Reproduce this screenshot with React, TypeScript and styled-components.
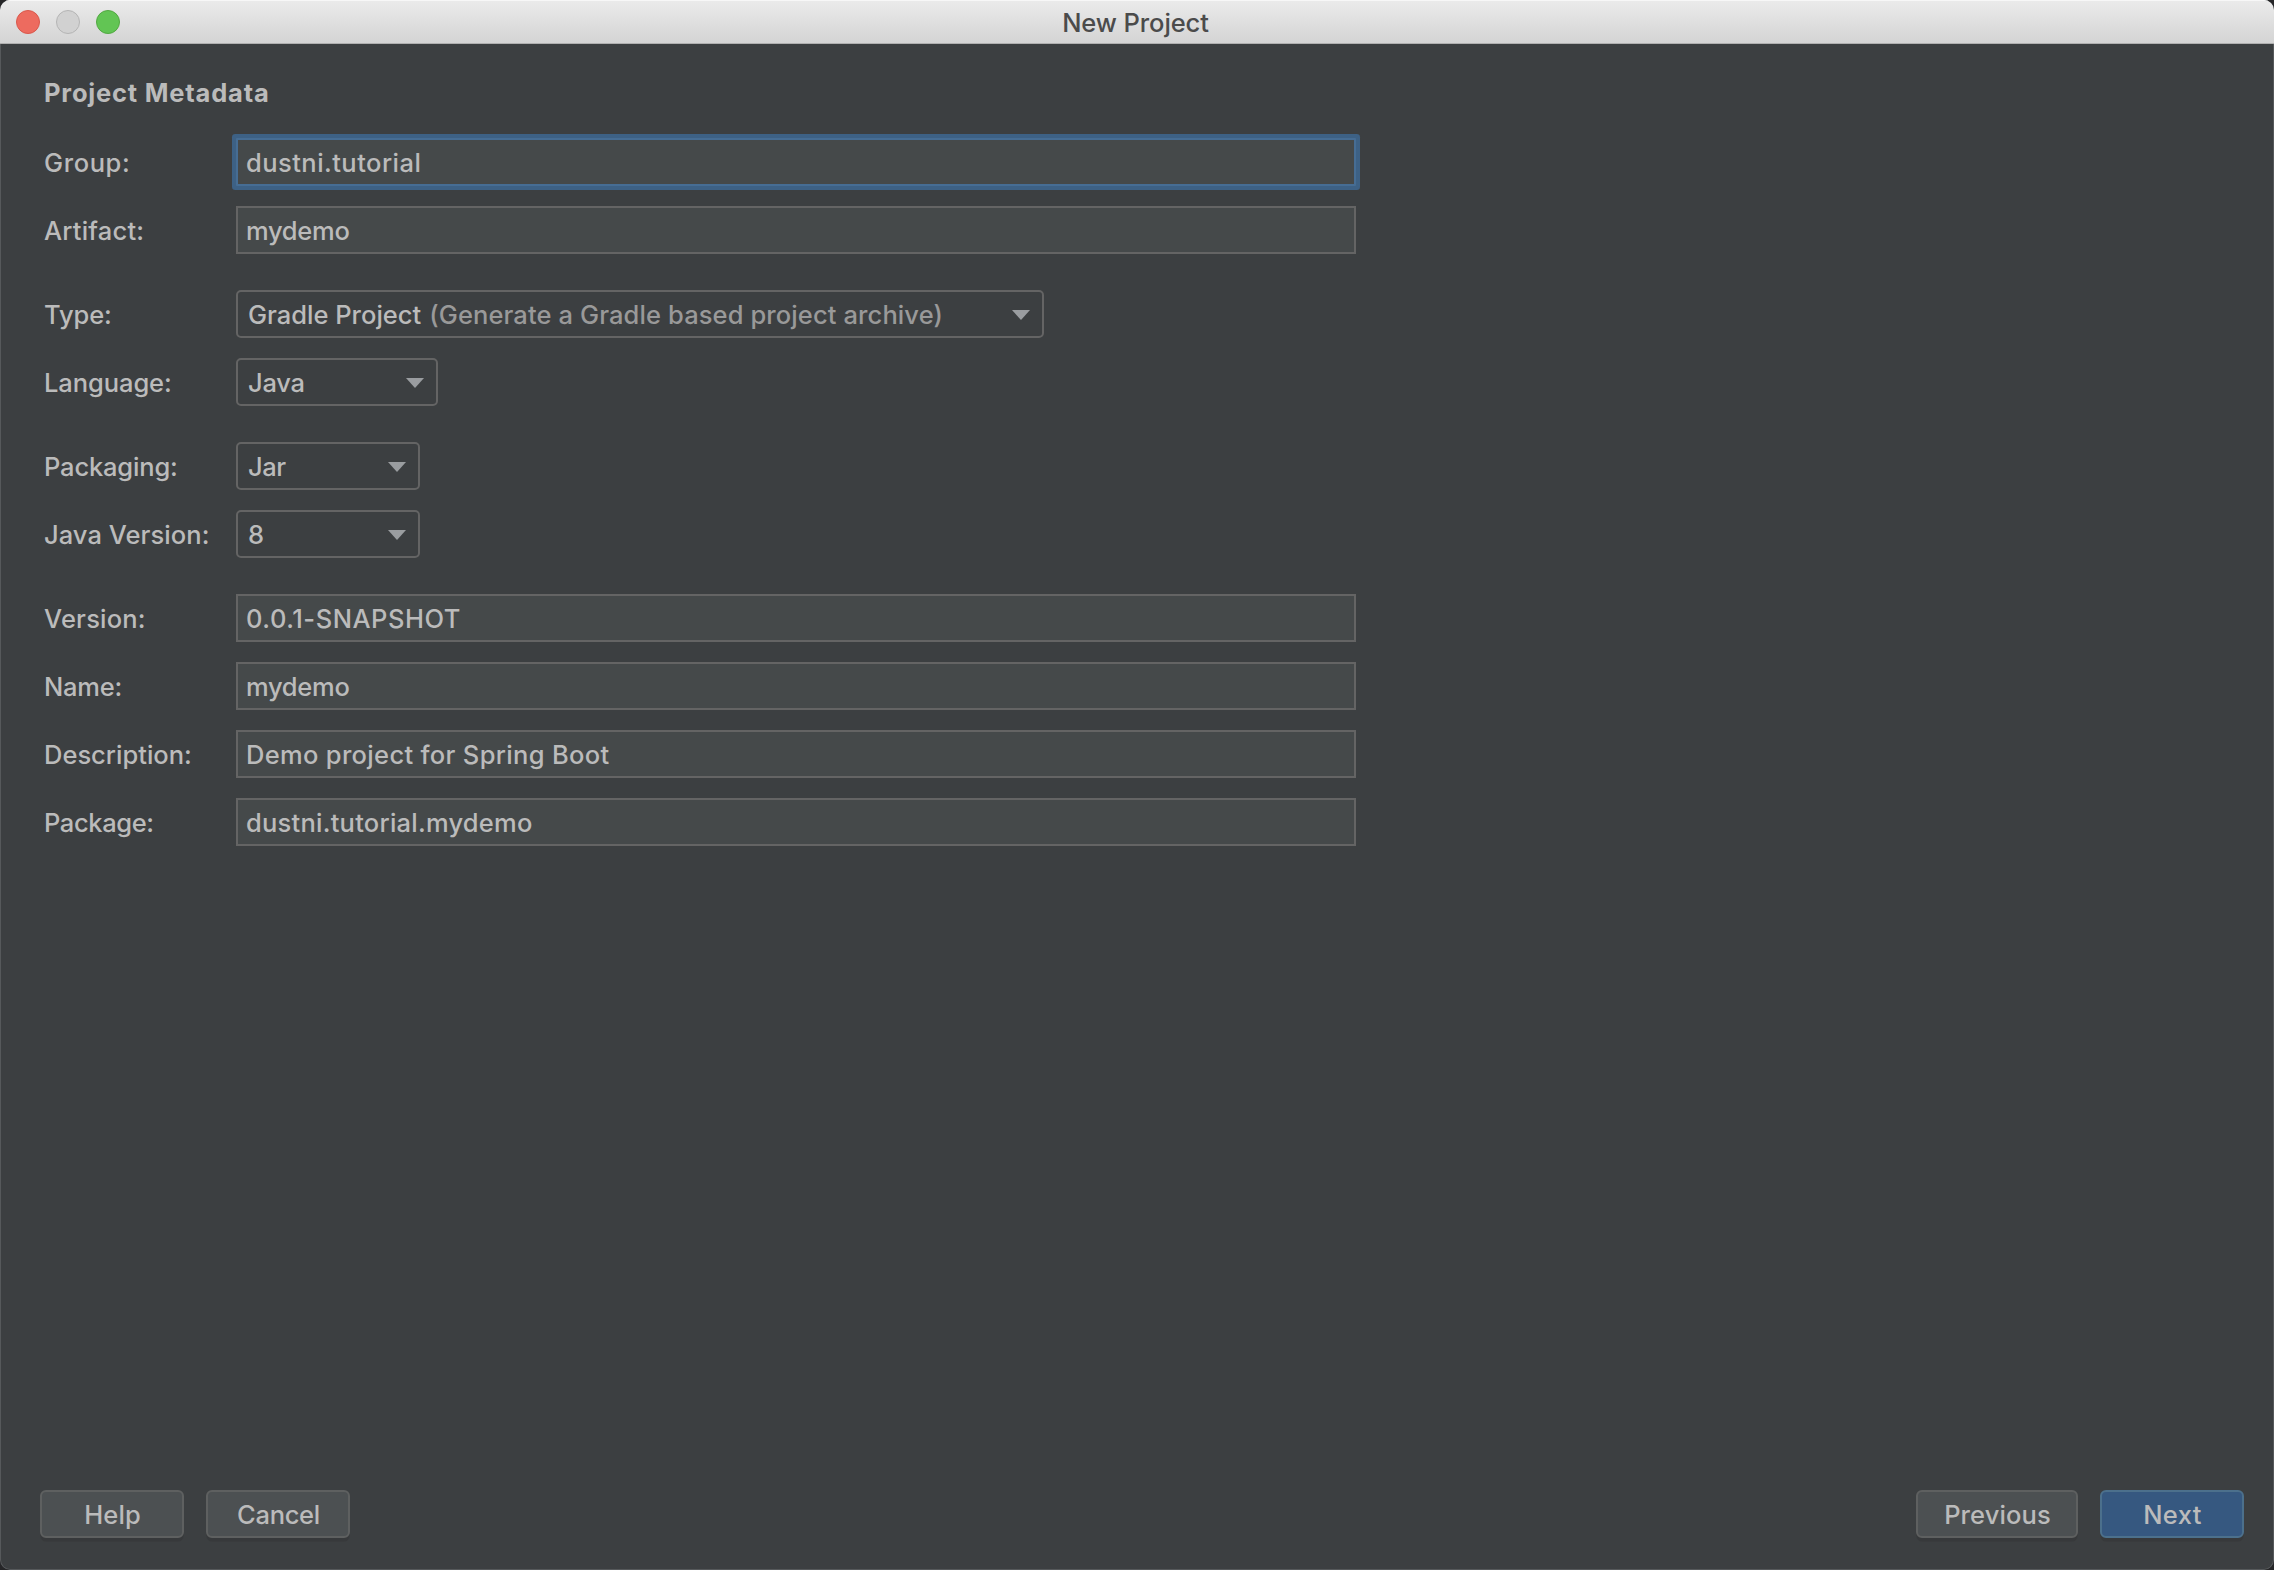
import React from 'react';
import styled, { createGlobalStyle, css } from 'styled-components';

const GlobalStyle = createGlobalStyle`
  *, *::before, *::after {
    box-sizing: border-box;
  }

  html, body {
    margin: 0;
    padding: 0;
    background: #262628;
  }

  body {
    font-family: Inter, "Liberation Sans", sans-serif;
    font-size: 25.5px;
    font-weight: 450;
    color: #bbbbbb;
  }
`;

const Window = styled.div`
  display: flex;
  flex-direction: column;
  width: 100vw;
  height: 100vh;
  overflow: hidden;
  background: #3c3f41;
  border-radius: 10px;
`;

const TitleBar = styled.header`
  display: grid;
  grid-template-columns: 1fr auto 1fr;
  flex: none;
  height: 44px;
  padding: 0 16px;
  background: linear-gradient(#ebebeb, #d4d4d4);
  border-bottom: 1px solid #b0b0b0;
  box-shadow: inset 0 1px 0 #f7f7f7;
`;

const TrafficLights = styled.div`
  display: flex;
  gap: 16px;
  padding-top: 10px;
`;

const Light = styled.span<{ $fill: string; $ring: string }>`
  width: 24px;
  height: 24px;
  border-radius: 50%;
  background: ${(p) => p.$fill};
  border: 1px solid ${(p) => p.$ring};
`;

const Tracked = styled.span<{ $track?: number }>`
  letter-spacing: ${(p) => p.$track ?? 0}px;
  white-space: pre;
`;

const Title = styled(Tracked)`
  line-height: 45px;
  color: #4b4b4b;
  padding-right: 3px;
`;

const Content = styled.main`
  display: flex;
  flex-direction: column;
  flex: 1;
  padding: 0 30px 31px 43px;
  border: 1px solid #56595b;
  border-top: 0;
  border-radius: 0 0 10px 10px;
`;

const Heading = styled.h1<{ $track: number }>`
  margin: 0;
  padding-top: 25px;
  height: 94px;
  font-size: 25.5px;
  font-weight: 700;
  line-height: 48px;
  letter-spacing: ${(p) => p.$track}px;
`;

const Form = styled.form`
  display: flex;
  flex-direction: column;
  gap: 36px;
  flex: 1;
`;

const Group = styled.div`
  display: flex;
  flex-direction: column;
  gap: 20px;
`;

const Row = styled.div`
  display: grid;
  grid-template-columns: 192px max-content;
  height: 48px;
`;

const Label = styled(Tracked)`
  line-height: 48px;
  padding-top: 1px;
`;

const Field = styled.div<{ $focused?: boolean }>`
  width: 1120px;
  height: 48px;
  padding: 0 8px;
  line-height: 46px;
  background: #45494a;
  border: 2px solid #646464;
  ${(p) =>
    p.$focused &&
    css`
      border-color: #466d94;
      border-radius: 1px;
      box-shadow: 0 0 0 4px #3d6185;
    `}
`;

const Combo = styled.div<{ $width: number }>`
  display: flex;
  align-items: center;
  justify-content: space-between;
  width: ${(p) => p.$width}px;
  height: 48px;
  padding: 0 12px 0 10px;
  border: 2px solid #646464;
  border-radius: 5px;
`;

const ComboText = styled.span`
  display: flex;
  gap: 8px;
  line-height: 44px;
  padding-top: 2px;
`;

const Hint = styled(Tracked)`
  color: #999999;
`;

const Footer = styled.footer`
  display: flex;
  justify-content: space-between;
  margin-left: -4px;
  margin-right: -1px;
`;

const ButtonGroup = styled.div`
  display: flex;
  gap: 22px;
`;

const Button = styled.button<{ $width?: number; $primary?: boolean; $track: number }>`
  width: ${(p) => p.$width ?? 144}px;
  height: 48px;
  padding: 2px 0 0 1px;
  font: inherit;
  line-height: 42px;
  letter-spacing: ${(p) => p.$track}px;
  color: #bbbbbb;
  background: ${(p) => (p.$primary ? '#365880' : '#4c5052')};
  border: 2px solid ${(p) => (p.$primary ? '#4c708c' : '#5e6060')};
  border-radius: 6px;
  box-shadow: 0 4px 0 -0.5px #37393b;
`;

const ArrowIcon = styled.svg`
  flex: none;
  margin-top: 2px;
`;

const Arrow = () => (
  <ArrowIcon width="18" height="10" viewBox="0 0 18 10" aria-hidden="true">
    <path d="M0 0H18L9 10Z" fill="#9a9da0" />
  </ArrowIcon>
);

type TextRow = { label: string; lt: number; value: string; vt: number; focused?: boolean };
type ComboRow = {
  label: string;
  lt: number;
  value: string;
  vt: number;
  width: number;
  hint?: string;
  ht?: number;
};

const coordinates: TextRow[] = [
  { label: 'Group:', lt: 0.6, value: 'dustni.tutorial', vt: 0.46, focused: true },
  { label: 'Artifact:', lt: 0.22, value: 'mydemo', vt: -0.28 },
];

const build: ComboRow[] = [
  {
    label: 'Type:',
    lt: -0.1,
    value: 'Gradle Project',
    vt: 0,
    width: 808,
    hint: '(Generate a Gradle based project archive)',
    ht: 0.11,
  },
  { label: 'Language:', lt: -0.08, value: 'Java', vt: -0.25, width: 202 },
];

const runtime: ComboRow[] = [
  { label: 'Packaging:', lt: -0.17, value: 'Jar', vt: -0.45, width: 184 },
  { label: 'Java Version:', lt: 0.06, value: '8', vt: 0, width: 184 },
];

const details: TextRow[] = [
  { label: 'Version:', lt: 0.2, value: '0.0.1-SNAPSHOT', vt: 0.53 },
  { label: 'Name:', lt: -0.25, value: 'mydemo', vt: -0.28 },
  { label: 'Description:', lt: 0, value: 'Demo project for Spring Boot', vt: 0.32 },
  { label: 'Package:', lt: -0.38, value: 'dustni.tutorial.mydemo', vt: 0.24 },
];

const TextRows = ({ rows }: { rows: TextRow[] }) => (
  <Group>
    {rows.map((r) => (
      <Row key={r.label}>
        <Label $track={r.lt}>{r.label}</Label>
        <Field $focused={r.focused}>
          <Tracked $track={r.vt}>{r.value}</Tracked>
        </Field>
      </Row>
    ))}
  </Group>
);

const ComboRows = ({ rows }: { rows: ComboRow[] }) => (
  <Group>
    {rows.map((r) => (
      <Row key={r.label}>
        <Label $track={r.lt}>{r.label}</Label>
        <Combo $width={r.width}>
          <ComboText>
            <Tracked $track={r.vt}>{r.value}</Tracked>
            {r.hint && <Hint $track={r.ht}>{r.hint}</Hint>}
          </ComboText>
          <Arrow />
        </Combo>
      </Row>
    ))}
  </Group>
);

export default function App() {
  return (
    <>
      <GlobalStyle />
      <Window>
        <TitleBar>
          <TrafficLights>
            <Light $fill="#ed6b5f" $ring="#d9584c" />
            <Light $fill="#d1d1d1" $ring="#b4b4b4" />
            <Light $fill="#62c554" $ring="#52a842" />
          </TrafficLights>
          <Title $track={-0.1}>New Project</Title>
        </TitleBar>
        <Content>
          <Heading $track={0.8}>Project Metadata</Heading>
          <Form>
            <TextRows rows={coordinates} />
            <ComboRows rows={build} />
            <ComboRows rows={runtime} />
            <TextRows rows={details} />
          </Form>
          <Footer>
            <ButtonGroup>
              <Button $track={0.1}>Help</Button>
              <Button $track={-0.3}>Cancel</Button>
            </ButtonGroup>
            <ButtonGroup>
              <Button $width={162} $track={0.12}>
                Previous
              </Button>
              <Button $primary $track={0.4}>
                Next
              </Button>
            </ButtonGroup>
          </Footer>
        </Content>
      </Window>
    </>
  );
}
